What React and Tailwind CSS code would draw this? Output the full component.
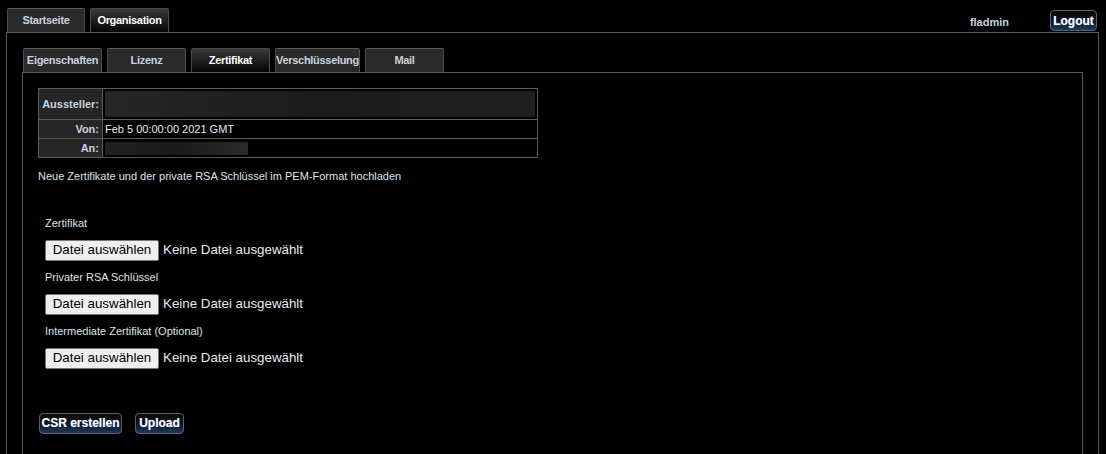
import React from "react"

const TOP_TABS = [
  { label: "Startseite", active: false, w: "w-[78px]" },
  { label: "Organisation", active: true, w: "w-[79px]" },
]

const SUB_TABS = [
  { label: "Eigenschaften", active: false, w: "w-[79px]" },
  { label: "Lizenz", active: false, w: "w-[79px]" },
  { label: "Zertifikat", active: true, w: "w-[79px]" },
  { label: "Verschlüsselung", active: false, w: "w-[85px]" },
  { label: "Mail", active: false, w: "w-[79px]" },
]

const UPLOADS = ["Zertifikat", "Privater RSA Schlüssel", "Intermediate Zertifikat (Optional)"]

function Tab({ label, active, w }) {
  return (
    <div
      className={`${w} h-[24px] flex items-center justify-center border border-b-0 rounded-t-[2px] text-[11px] font-bold tracking-[-0.3px] whitespace-nowrap ${
        active
          ? "border-[#4a4a4a] bg-gradient-to-b from-[#3c3c3c] to-[#050505] text-white"
          : "border-[#4c4c4c] border-t-[#5a5a5a] bg-[#2a2a2a] text-[#c8d2de]"
      }`}
    >
      {label}
    </div>
  )
}

function DarkButton({ children, className = "" }) {
  return (
    <button
      className={`h-[21px] rounded-[4px] border border-[#5c5f63] bg-gradient-to-b from-[#0a0a0a] via-[#101418] to-[#1d3a60] text-[12px] font-bold text-white whitespace-nowrap [text-shadow:0_0_1px_#4a80d0] ${className}`}
    >
      {children}
    </button>
  )
}

function FileField({ label }) {
  return (
    <div className="flex flex-col">
      <div className="h-[13px] text-[11px] leading-[13px] text-[#dde3ea]">{label}</div>
      <div className="mt-[10px] flex items-center h-[21px]">
        <div className="h-[21px] w-[114px] flex items-center justify-center border border-[#767676] rounded-[2px] bg-[#efefef] text-[13.33px] text-black">
          Datei auswählen
        </div>
        <span className="ml-[4px] text-[13.33px] text-[#e6e9ee]">Keine Datei ausgewählt</span>
      </div>
    </div>
  )
}

export default function App() {
  return (
    <div className="w-full h-[454px] bg-black overflow-hidden font-['Liberation_Sans',Arial,sans-serif] pt-[8px] pl-[6px] pr-[7px]">
      {/* header */}
      <div className="flex items-end h-[24px]">
        <div className="flex gap-[5px] pl-[1px]">
          {TOP_TABS.map((t) => (
            <Tab key={t.label} {...t} />
          ))}
        </div>
        <div className="ml-auto flex items-start self-stretch pr-[2px]">
          <span className="mt-[6px] text-[11px] font-bold text-[#c8d2de]">fladmin</span>
          <DarkButton className="ml-[41px] mt-[2px] h-[20px] w-[47px] px-0">Logout</DarkButton>
        </div>
      </div>

      {/* outer panel */}
      <div className="border-l border-t border-r border-[#555a60] h-[430px] pt-[15px] pl-[15px] pr-[15px]">
        <div className="flex gap-[5px] pl-[1px]">
          {SUB_TABS.map((t) => (
            <Tab key={t.label} {...t} />
          ))}
        </div>

        {/* inner panel */}
        <div className="border-l border-t border-r border-[#555a60] h-[400px] pt-[15px] pl-[15px]">
          <table className="w-[500px] border-collapse text-[11px]">
            <tbody>
              <tr className="h-[31px]">
                <td className="w-[65px] border border-[#555a60] bg-[#262626] text-right pr-[3px] font-bold text-[#c8d2de]">Aussteller:</td>
                <td className="border border-[#555a60] px-[2px]">
                  <div className="h-[26px] w-[430px] bg-gradient-to-r from-[#262626] via-[#1c1c1c] to-[#202020]" />
                </td>
              </tr>
              <tr className="h-[19px]">
                <td className="border border-[#555a60] bg-[#262626] text-right pr-[3px] font-bold text-[#c8d2de]">Von:</td>
                <td className="border border-[#555a60] px-[2px] text-[#e6e9ee]">Feb 5 00:00:00 2021 GMT</td>
              </tr>
              <tr className="h-[19px]">
                <td className="border border-[#555a60] bg-[#262626] text-right pr-[3px] font-bold text-[#c8d2de]">An:</td>
                <td className="border border-[#555a60] px-[2px]">
                  <div className="h-[13px] w-[143px] bg-gradient-to-r from-[#202020] via-[#1a1a1a] to-[#2a2a2a]" />
                </td>
              </tr>
            </tbody>
          </table>

          <p className="mt-[10px] text-[11px] text-[#dde3ea]">
            Neue Zertifikate und der private RSA Schlüssel im PEM-Format hochladen
          </p>

          <div className="mt-[32px] pl-[7px] flex flex-col gap-[10px]">
            {UPLOADS.map((l) => (
              <FileField key={l} label={l} />
            ))}
          </div>

          <div className="mt-[44px] pl-[1px] flex gap-[13px]">
            <DarkButton className="w-[83px] px-0">CSR erstellen</DarkButton>
            <DarkButton className="w-[49px] px-0">Upload</DarkButton>
          </div>
        </div>
      </div>
    </div>
  )
}
